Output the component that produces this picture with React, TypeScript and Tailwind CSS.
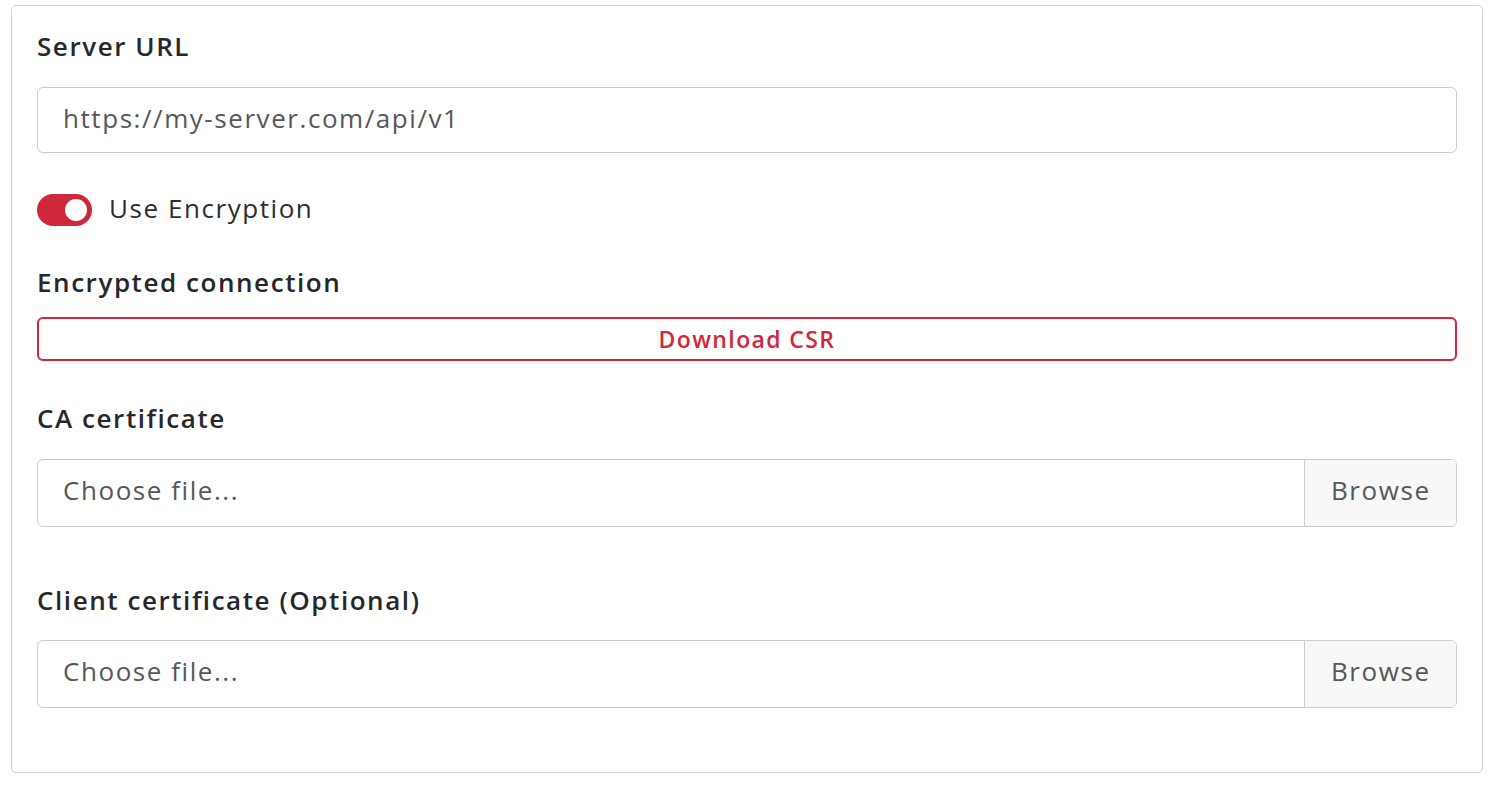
import React from 'react';

const FileField: React.FC = () => {
  return (
    <div className="flex h-[68px] w-full rounded-[6px] border border-[#cccccc] bg-white overflow-hidden">
      <div className="flex flex-1 items-center pb-[6px] pl-[25px] text-[26px] leading-[32px] tracking-[0.06em] text-[#55575b]">
        Choose file...
      </div>
      <div className="flex w-[152px] items-center border-l border-[#cccccc] bg-[#f8f8f8] pb-[6px] pl-[26px] text-[26px] leading-[32px] tracking-[0.06em] text-[#55575b]">
        Browse
      </div>
    </div>
  );
};

const Label: React.FC<{ children: React.ReactNode; className?: string }> = ({ children, className }) => (
  <div className={`h-[32px] text-[26px] font-semibold leading-[32px] tracking-[0.06em] text-[#25272b] ${className ?? ''}`}>
    {children}
  </div>
);

const App: React.FC = () => {
  return (
    <div className="min-h-screen bg-white pl-[11px] pt-[5px]" style={{ fontFamily: '"Open Sans", sans-serif' }}>
      <div className="w-[1472px] h-[768px] rounded-[5px] border border-[#d0d0d0] bg-white px-[25px] pt-[24px]">
        {/* Server URL */}
        <Label>Server URL</Label>
        <div className="mt-[25px] flex h-[66px] items-center rounded-[6px] border border-[#cccccc] pb-[4px] pl-[25px] text-[26px] leading-[32px] tracking-[0.06em] text-[#55575b]">
          https://my-server.com/api/v1
        </div>

        {/* Toggle */}
        <div className="mt-[41px] flex h-[32px] items-center">
          <div className="flex h-[32px] w-[55px] items-center justify-end rounded-full bg-[#d0283a] pr-[5px]">
            <div className="h-[22px] w-[22px] rounded-full bg-white" />
          </div>
          <span className="ml-[17px] pb-[4px] text-[26px] leading-[32px] tracking-[0.06em] text-[#2b2d31]">Use Encryption</span>
        </div>

        {/* Encrypted connection */}
        <Label className="mt-[40px]">Encrypted connection</Label>
        <button className="mt-[19px] flex h-[44px] w-full items-center justify-center rounded-[6px] border-2 border-[#d0283a] bg-white text-[23px] font-semibold leading-[28px] tracking-[0.06em] text-[#d0283a]">
          Download CSR
        </button>

        {/* CA certificate */}
        <Label className="mt-[41px]">CA certificate</Label>
        <div className="mt-[25px]">
          <FileField />
        </div>

        {/* Client certificate */}
        <Label className="mt-[57px]">Client certificate (Optional)</Label>
        <div className="mt-[24px]">
          <FileField />
        </div>
      </div>
    </div>
  );
};

export default App;
